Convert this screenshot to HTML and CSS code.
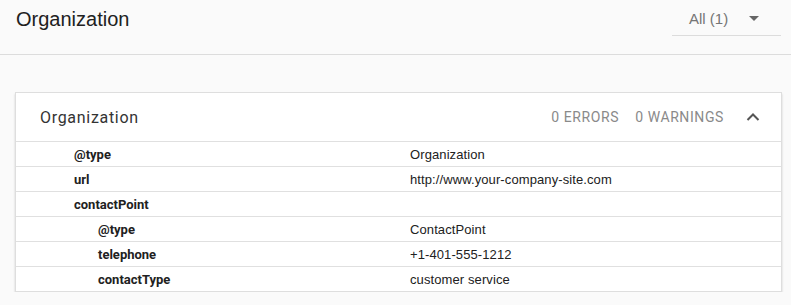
FILE: index.html
```html
<!DOCTYPE html>
<html lang="en">
<head>
    <meta charset="UTF-8">
    <meta name="viewport" content="width=device-width, initial-scale=1.0">
    <title>Organization</title>
    <link rel="stylesheet" href="styles.css">
</head>
<body>
    <header class="topbar">
        <h1 class="page-title">Organization</h1>
        <div class="filter">
            <span class="filter-label">All (1)</span>
            <svg class="filter-arrow" width="10" height="5" viewBox="0 0 10 5"><path d="M0 0h10L5 5z" fill="#666"/></svg>
        </div>
    </header>

    <main class="content">
        <section class="card">
            <div class="card-head">
                <span class="card-title">Organization</span>
                <span class="count">0 ERRORS</span>
                <span class="count">0 WARNINGS</span>
                <svg class="caret" width="14" height="8" viewBox="0 0 14 8"><path d="M1.5 7L7 1.5 12.5 7" fill="none" stroke="#555" stroke-width="2"/></svg>
            </div>
            <div class="row">
                <span class="key">@type</span>
                <span class="val">Organization</span>
            </div>
            <div class="row">
                <span class="key">url</span>
                <span class="val">http://www.your-company-site.com</span>
            </div>
            <div class="row">
                <span class="key">contactPoint</span>
                <span class="val"></span>
            </div>
            <div class="row">
                <span class="key nested">@type</span>
                <span class="val">ContactPoint</span>
            </div>
            <div class="row">
                <span class="key nested">telephone</span>
                <span class="val">+1-401-555-1212</span>
            </div>
            <div class="row">
                <span class="key nested">contactType</span>
                <span class="val">customer service</span>
            </div>
        </section>
    </main>
</body>
</html>
```

FILE: styles.css
```css
body {
    margin: 0;
    background-color: #fafafa;
    font-family: Roboto, "Liberation Sans", Arial, sans-serif;
    color: #212121;
}
.topbar {
    height: 54px;
    border-bottom: 1px solid #dcdcdc;
    display: flex;
    align-items: flex-start;
    justify-content: space-between;
    padding: 0 10px 0 16px;
}
.page-title {
    margin: 0;
    padding-top: 7px;
    font-family: "Liberation Sans", Arial, sans-serif;
    font-weight: normal;
    font-size: 20px;
    line-height: 24px;
    color: #212121;
}
.filter {
    width: 109px;
    height: 36px;
    box-sizing: border-box;
    border-bottom: 1px solid #dcdcdc;
    display: flex;
    align-items: center;
    justify-content: space-between;
    padding: 2px 22px 0 17px;
}
.filter-label {
    font-family: "Liberation Sans", Arial, sans-serif;
    font-size: 15px;
    color: #757575;
}
.content {
    padding: 37px 9px 0 15px;
}
.card {
    background-color: #fff;
    border: 1px solid #dedede;
    box-shadow: 0 2px 2px rgba(0, 0, 0, 0.18);
}
.card-head {
    height: 48px;
    display: flex;
    align-items: center;
    padding: 0 21px 0 24px;
}
.card-title {
    flex: 1;
    font-size: 16px;
    letter-spacing: 0.7px;
    color: #333;
}
.count {
    font-size: 14px;
    letter-spacing: 0.6px;
    color: #8a8a8a;
    margin-right: 16px;
}
.caret {
    margin-left: 6px;
}
.row {
    display: grid;
    grid-template-columns: 394px 1fr;
    height: 24px;
    align-items: center;
    border-top: 1px solid #e0e0e0;
    font-size: 13px;
}
.key {
    padding-left: 58px;
    font-weight: bold;
    color: #212121;
}
.key.nested {
    padding-left: 82px;
}
.val {
    font-family: "Liberation Sans", Arial, sans-serif;
    letter-spacing: 0.1px;
    color: #212121;
}
```
